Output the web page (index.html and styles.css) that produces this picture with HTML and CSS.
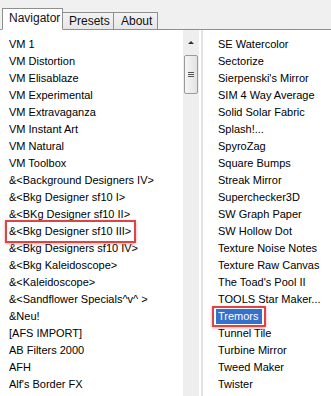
FILE: index.html
```html
<!DOCTYPE html>
<html>
<head>
<meta charset="utf-8">
<link rel="stylesheet" href="styles.css">
</head>
<body>
<div class="win">
  <div class="tabs">
    <div class="tab active">Navigator</div>
    <div class="tab">Presets</div>
    <div class="tab">About</div>
  </div>
  <div class="panel">
    <ul class="list left">
      <li>VM 1</li>
      <li>VM Distortion</li>
      <li>VM Elisablaze</li>
      <li>VM Experimental</li>
      <li>VM Extravaganza</li>
      <li>VM Instant Art</li>
      <li>VM Natural</li>
      <li>VM Toolbox</li>
      <li>&amp;&lt;Background Designers IV&gt;</li>
      <li>&amp;&lt;Bkg Designer sf10 I&gt;</li>
      <li>&amp;&lt;BKg Designer sf10 II&gt;</li>
      <li><span class="mark">&amp;&lt;Bkg Designer sf10 III&gt;</span></li>
      <li>&amp;&lt;Bkg Designers sf10 IV&gt;</li>
      <li>&amp;&lt;Bkg Kaleidoscope&gt;</li>
      <li>&amp;&lt;Kaleidoscope&gt;</li>
      <li>&amp;&lt;Sandflower Specials^v^ &gt;</li>
      <li>&amp;Neu!</li>
      <li>[AFS IMPORT]</li>
      <li>AB Filters 2000</li>
      <li>AFH</li>
      <li>Alf's Border FX</li>
    </ul>
    <div class="scroll">
      <div class="arrow"></div>
      <div class="thumb"><span></span><span></span><span></span></div>
    </div>
    <div class="sep"></div>
    <ul class="list right">
      <li>SE Watercolor</li>
      <li>Sectorize</li>
      <li>Sierpenski's Mirror</li>
      <li>SIM 4 Way Average</li>
      <li>Solid Solar Fabric</li>
      <li>Splash!...</li>
      <li>SpyroZag</li>
      <li>Square Bumps</li>
      <li>Streak Mirror</li>
      <li>Superchecker3D</li>
      <li>SW Graph Paper</li>
      <li>SW Hollow Dot</li>
      <li>Texture Noise Notes</li>
      <li>Texture Raw Canvas</li>
      <li>The Toad's Pool II</li>
      <li>TOOLS Star Maker...</li>
      <li><span class="mark sel">Tremors</span></li>
      <li>Tunnel Tile</li>
      <li>Turbine Mirror</li>
      <li>Tweed Maker</li>
      <li>Twister</li>
    </ul>
  </div>
</div>
</body>
</html>
```
FILE: styles.css
```css
* { box-sizing: border-box; }
html, body { margin: 0; padding: 0; }
body {
  width: 331px;
  height: 396px;
  overflow: hidden;
  background: #f0f0f0;
  font-family: "Liberation Sans", Arial, sans-serif;
  font-size: 11px;
  color: #000;
}
.win { display: flex; flex-direction: column; height: 396px; }
.tabs {
  display: flex;
  align-items: flex-end;
  height: 30px;
  padding-left: 2px;
  border-bottom: 1px solid #8e8f8f;
  background: #f0f0f0;
}
.tab {
  height: 18px;
  padding: 0 7px;
  margin-bottom: -1px;
  border: 1px solid #8e8f8f;
  border-left: none;
  background: linear-gradient(#f3f3f3, #e6e6e6);
  font-size: 12px;
  line-height: 17px;
  color: #111;
}
.tab.active {
  height: 22px;
  padding: 0 8px 0 6px;
  border-left: 1px solid #8e8f8f;
  border-bottom-color: #fff;
  background: #fff;
  line-height: 18px;
  width: 61px;
}
.tab:nth-child(2) { width: 51px; padding-left: 6px; }
.tab:nth-child(3) { width: 44px; padding-left: 7px; }
.panel {
  flex: 1;
  display: flex;
  background: #fff;
  padding-top: 6px;
}
.list {
  list-style: none;
  margin: 0;
  padding: 0;
}
.list li {
  height: 17px;
  line-height: 17px;
  white-space: nowrap;
}
.left { width: 183px; padding-left: 9px; }
.right { padding-left: 15px; }
.mark {
  display: inline-block;
  position: relative;
}
.left .mark::before {
  content: "";
  position: absolute;
  left: -4px; right: -5px; top: -3px; bottom: -3px;
  border: 2px solid #d9464a;
  box-shadow: 0 1px 3px rgba(200, 60, 60, 0.45);
}
.sel {
  background: #3470cc;
  color: #fff;
  padding: 0 3px 0 2px;
  margin-left: -2px;
  height: 15px;
  line-height: 15px;
}
.sel::before {
  content: "";
  position: absolute;
  left: -4px; right: -4px; top: -3px; bottom: -3px;
  border: 2px solid #d9464a;
  box-shadow: 0 1px 3px rgba(200, 60, 60, 0.45);
}
.scroll {
  width: 16px;
  margin-top: -6px;
  background: #eeeeee;
  position: relative;
}
.arrow {
  position: absolute;
  left: 5px; top: 11px;
  width: 0; height: 0;
  border-left: 3px solid transparent;
  border-right: 3px solid transparent;
  border-bottom: 3px solid #333;
}
.thumb {
  position: absolute;
  left: 1px; top: 25px;
  width: 14px; height: 39px;
  border: 1px solid #9a9a9a;
  border-radius: 2px;
  background: linear-gradient(90deg, #f6f6f6, #e2e2e2);
  display: flex;
  flex-direction: column;
  justify-content: center;
  align-items: center;
  gap: 1px;
}
.thumb span {
  display: block;
  width: 6px;
  height: 1px;
  background: #555;
}
.sep {
  width: 4px;
  margin-top: -6px;
  border-right: 2px solid #e3e3e3;
  background: #fff;
}
```
